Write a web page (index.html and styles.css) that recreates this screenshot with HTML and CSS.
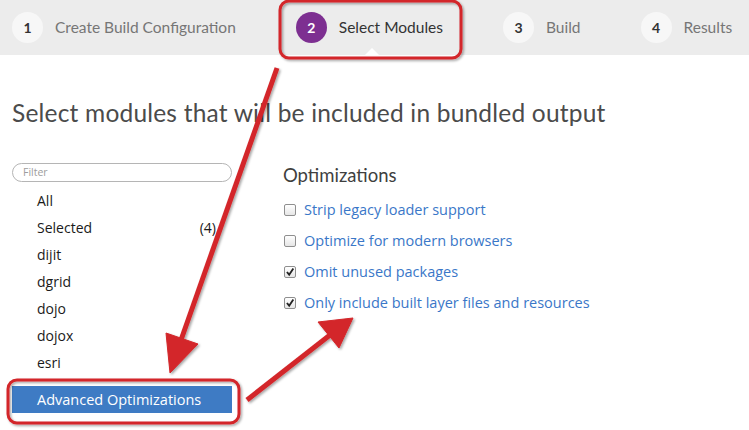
FILE: index.html
```html
<!DOCTYPE html>
<html>
<head>
<meta charset="utf-8">
<link rel="stylesheet" href="styles.css">
</head>
<body>
<div class="page">
  <nav class="steps">
    <div class="step"><span class="num">1</span><span class="label">Create Build Configuration</span></div>
    <div class="step active"><span class="num">2</span><span class="label">Select Modules</span></div>
    <div class="step"><span class="num">3</span><span class="label">Build</span></div>
    <div class="step"><span class="num">4</span><span class="label">Results</span></div>
  </nav>
  <main class="content">
    <h1 class="title">Select modules that will be included in bundled output</h1>
    <div class="columns">
      <aside class="sidebar">
        <div class="filter">Filter</div>
        <ul class="list">
          <li>All</li>
          <li class="with-count"><span>Selected</span><span class="count">(4)</span></li>
          <li>dijit</li>
          <li>dgrid</li>
          <li>dojo</li>
          <li>dojox</li>
          <li>esri</li>
        </ul>
        <div class="advanced">Advanced Optimizations</div>
      </aside>
      <section class="opts">
        <h2 class="opts-title">Optimizations</h2>
        <div class="opt"><span class="box"></span><span class="opt-label">Strip legacy loader support</span></div>
        <div class="opt"><span class="box"></span><span class="opt-label">Optimize for modern browsers</span></div>
        <div class="opt"><span class="box checked"><svg viewBox="0 0 12 12" width="12" height="12"><path d="M2.3 6 L5 9.2 L10 1.8" fill="none" stroke="#222" stroke-width="2.2"/></svg></span><span class="opt-label">Omit unused packages</span></div>
        <div class="opt"><span class="box checked"><svg viewBox="0 0 12 12" width="12" height="12"><path d="M2.3 6 L5 9.2 L10 1.8" fill="none" stroke="#222" stroke-width="2.2"/></svg></span><span class="opt-label">Only include built layer files and resources</span></div>
      </section>
    </div>
  </main>
  <svg class="annot" width="749" height="430" viewBox="0 0 749 430">
    <defs>
      <filter id="sh" x="-20%" y="-20%" width="140%" height="140%">
        <feDropShadow dx="1.5" dy="1.5" stdDeviation="1.2" flood-color="#000" flood-opacity="0.35"/>
      </filter>
    </defs>
    <g filter="url(#sh)" fill="none" stroke="#d3262a" stroke-width="3">
      <rect x="280" y="1" width="181" height="57" rx="9"/>
      <rect x="8" y="380" width="231" height="43" rx="9"/>
    </g>
    <g filter="url(#sh)" fill="#d3262a" stroke="#d3262a">
      <line x1="277" y1="68" x2="181" y2="340" stroke-width="5"/>
      <polygon points="170,373 166,333 198,344" stroke-width="1"/>
      <line x1="247" y1="400" x2="330" y2="335" stroke-width="5"/>
      <polygon points="353,318 318,322 339,348" stroke-width="1"/>
    </g>
  </svg>
</div>
</body>
</html>
```

FILE: styles.css
```css
* { box-sizing: border-box; }
html, body { margin: 0; padding: 0; background: #fff; }
body { width: 749px; height: 430px; overflow: hidden; }
.page { position: relative; width: 749px; height: 430px; }

.steps {
  display: flex;
  align-items: center;
  gap: 60px;
  height: 55px;
  padding-left: 12px;
  background: #ececec;
  font-family: Lato, "Open Sans", sans-serif;
  font-size: 15.5px;
}
.step { display: flex; align-items: center; gap: 12px; position: relative; height: 55px; padding-bottom: 1px; }
.num {
  width: 31px; height: 31px; border-radius: 50%;
  background: #f7f7f7; color: #333;
  display: flex; align-items: center; justify-content: center;
  font-size: 14px; font-weight: 700;
}
.label { color: #767676; }
.step.active .num { background: #7d2f91; color: #fff; }
.step.active .label { color: #333; }
.step.active::after {
  content: "";
  position: absolute;
  left: 69px; bottom: 0;
  border-left: 7px solid transparent;
  border-right: 7px solid transparent;
  border-bottom: 7px solid #fff;
}

.content { padding: 0 12px; }
.title {
  margin: 43px 0 0;
  font-family: Lato, "Open Sans", sans-serif;
  font-weight: 400;
  font-size: 24.5px;
  color: #4b4b4b;
  line-height: 30px;
  letter-spacing: 0.2px;
}
.columns { display: flex; gap: 51px; margin-top: 35px; }
.sidebar { width: 220px; }
.filter {
  height: 19px;
  border: 1px solid #b5b5b5;
  border-radius: 10px;
  padding-left: 10px;
  font-family: "Open Sans", sans-serif;
  font-size: 10.5px;
  line-height: 17px;
  color: #9d9d9d;
}
.list {
  list-style: none; margin: 5px 0 0; padding: 0;
  font-family: "Open Sans", sans-serif;
  font-size: 14px;
  color: #1a1a1a;
}
.list li { height: 27px; line-height: 27px; padding-left: 25px; padding-right: 16px; }
.list .with-count { display: flex; justify-content: space-between; }
.advanced {
  margin-top: 10px;
  height: 27px;
  line-height: 27px;
  background: #3e7bc4;
  color: #fff;
  padding-left: 25px;
  font-family: "Open Sans", sans-serif;
  font-size: 14.5px;
}

.opts { padding-top: 1px; }
.opts-title {
  margin: 0 0 8px;
  font-family: Lato, "Open Sans", sans-serif;
  font-weight: 400;
  font-size: 18.5px;
  line-height: 22px;
  color: #3f3f3f;
}
.opt { display: flex; align-items: center; gap: 8px; height: 31px; }
.box {
  width: 12px; height: 12px;
  border: 1px solid #8f8f8f;
  border-radius: 2px;
  background: linear-gradient(#fff, #e6e6e6);
  display: flex; align-items: center; justify-content: center;
  margin-left: 1px;
}
.box svg { display: block; }
.opt-label {
  font-family: "Open Sans", sans-serif;
  font-size: 14.5px;
  color: #3a77c8;
}

.annot { position: absolute; left: 0; top: 0; pointer-events: none; }
```
